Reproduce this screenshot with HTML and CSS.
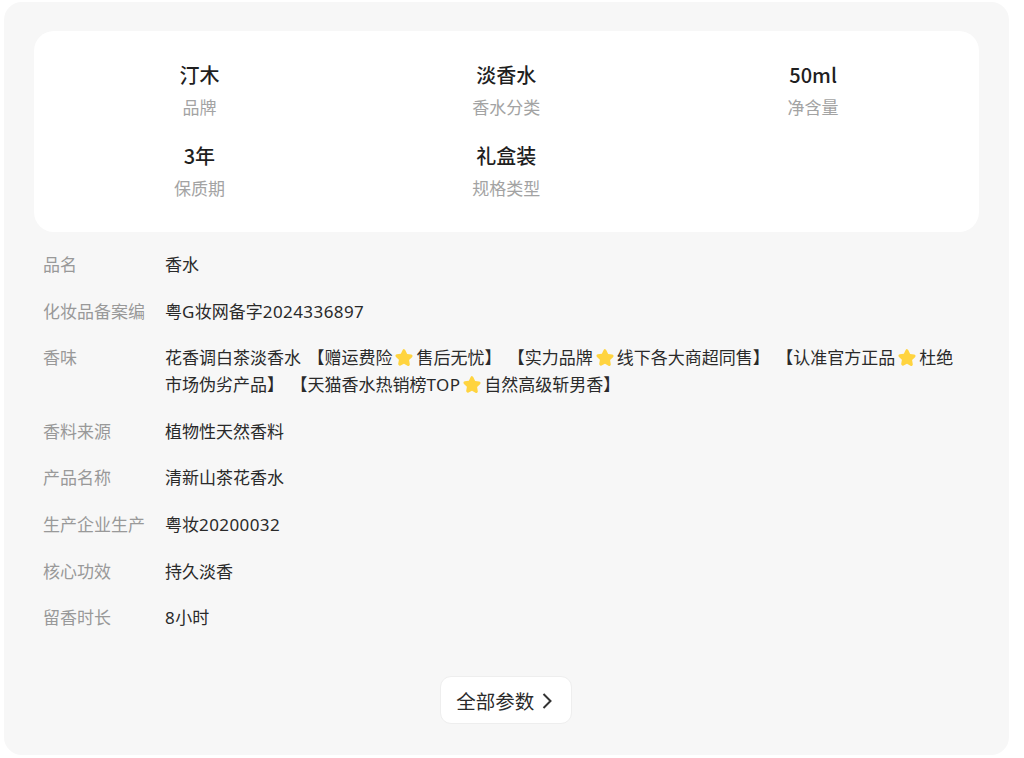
FILE: index.html
```html
<!DOCTYPE html>
<html lang="zh-CN">
<head>
<meta charset="utf-8">
<title>商品参数</title>
<link rel="stylesheet" href="styles.css">
</head>
<body>
<svg class="defs" width="0" height="0" aria-hidden="true"><defs><symbol id="star" viewBox="0 0 24 24"><path d="M12 1.8c.8 0 1.4.5 1.8 1.3l2.4 4.9 5.4.8c1.8.3 2.4 2.3 1.1 3.5l-3.9 3.8.9 5.4c.3 1.8-1.5 3-3.1 2.2L12 20.9l-4.6 2.4c-1.6.8-3.4-.4-3.1-2.2l.9-5.4-3.9-3.8c-1.3-1.2-.7-3.2 1.1-3.5l5.4-.8 2.4-4.9c.4-.8 1-1.3 1.8-1.3z" fill="#ffd43f"/></symbol></defs></svg>
<main class="panel">
  <section class="card">
    <div class="stat"><div class="stat-value">汀木</div><div class="stat-label">品牌</div></div>
    <div class="stat"><div class="stat-value">淡香水</div><div class="stat-label">香水分类</div></div>
    <div class="stat"><div class="stat-value">50ml</div><div class="stat-label">净含量</div></div>
    <div class="stat"><div class="stat-value">3年</div><div class="stat-label">保质期</div></div>
    <div class="stat"><div class="stat-value">礼盒装</div><div class="stat-label">规格类型</div></div>
  </section>
  <section class="params">
    <div class="row"><div class="key">品名</div><div class="val">香水</div></div>
    <div class="row"><div class="key">化妆品备案编</div><div class="val">粤<span class="num">G</span>妆网备字<span class="num">2024336897</span></div></div>
    <div class="row"><div class="key">香味</div><div class="val">花香调白茶淡香水 【赠运费险<svg class="star"><use href="#star"/></svg>售后无忧】 【实力品牌<svg class="star"><use href="#star"/></svg>线下各大商超同售】 【认准官方正品<svg class="star"><use href="#star"/></svg>杜绝市场伪劣产品】 【天猫香水热销榜<span class="num">TOP</span><svg class="star"><use href="#star"/></svg>自然高级斩男香】</div></div>
    <div class="row"><div class="key">香料来源</div><div class="val">植物性天然香料</div></div>
    <div class="row"><div class="key">产品名称</div><div class="val">清新山茶花香水</div></div>
    <div class="row"><div class="key">生产企业生产</div><div class="val">粤妆<span class="num">20200032</span></div></div>
    <div class="row"><div class="key">核心功效</div><div class="val">持久淡香</div></div>
    <div class="row"><div class="key">留香时长</div><div class="val"><span class="num">8</span>小时</div></div>
  </section>
  <div class="more-wrap">
    <button class="more" type="button">全部参数<svg class="chev" viewBox="0 0 10 16" width="10" height="16"><path d="M1.5 1 8.5 8l-7 7" fill="none" stroke="#333" stroke-width="2"/></svg></button>
  </div>
</main>
</body>
</html>
```
FILE: styles.css
```css
* { box-sizing: border-box; }
html, body { margin: 0; background: #fff; }
body {
  padding: 2px 15.5px 3px 4px;
  font-family: "Noto Sans CJK SC", "Noto Sans", sans-serif;
  color: #222;
}
.defs { position: absolute; }
.panel {
  height: 753px;
  background: #f7f7f7;
  border-radius: 18px;
  padding: 29px 30px 0;
}
.card {
  height: 201px;
  background: #fff;
  border-radius: 20px;
  padding: 30px 12px 0 12px;
  display: grid;
  grid-template-columns: repeat(3, 1fr);
  grid-auto-rows: 81px;
  text-align: center;
}
.stat-value {
  font-size: 20px;
  line-height: 28px;
  font-weight: 500;
  color: #1f1f1f;
}
.stat-label {
  font-size: 17px;
  line-height: 24px;
  margin-top: 6px;
  color: #a3a3a3;
}
.params {
  padding: 18px 9px 0;
  display: flex;
  flex-direction: column;
  gap: 19.6px;
}
.row {
  display: flex;
  font-size: 17px;
  line-height: 27px;
}
.key {
  flex: 0 0 122px;
  color: #999;
  white-space: nowrap;
}
.val {
  flex: 1;
  color: #2a2a2a;
  word-spacing: 2.6px;
  padding-right: 10px;
}
.num {
  font-family: "Noto Sans", sans-serif;
  letter-spacing: 0.42px;
  line-height: 1;
}
.star {
  width: 18px;
  height: 18px;
  vertical-align: -2px;
  margin: 0 3px;
}
.more-wrap {
  display: flex;
  justify-content: center;
  margin-top: 46px;
}
.more {
  width: 132px;
  height: 48px;
  background: #fff;
  border: 1px solid #eeeeee;
  border-radius: 11px;
  font: inherit;
  font-size: 19.5px;
  color: #2a2a2a;
  display: flex;
  align-items: center;
  gap: 8px;
  padding: 1px 0 0 15px;
}
```
